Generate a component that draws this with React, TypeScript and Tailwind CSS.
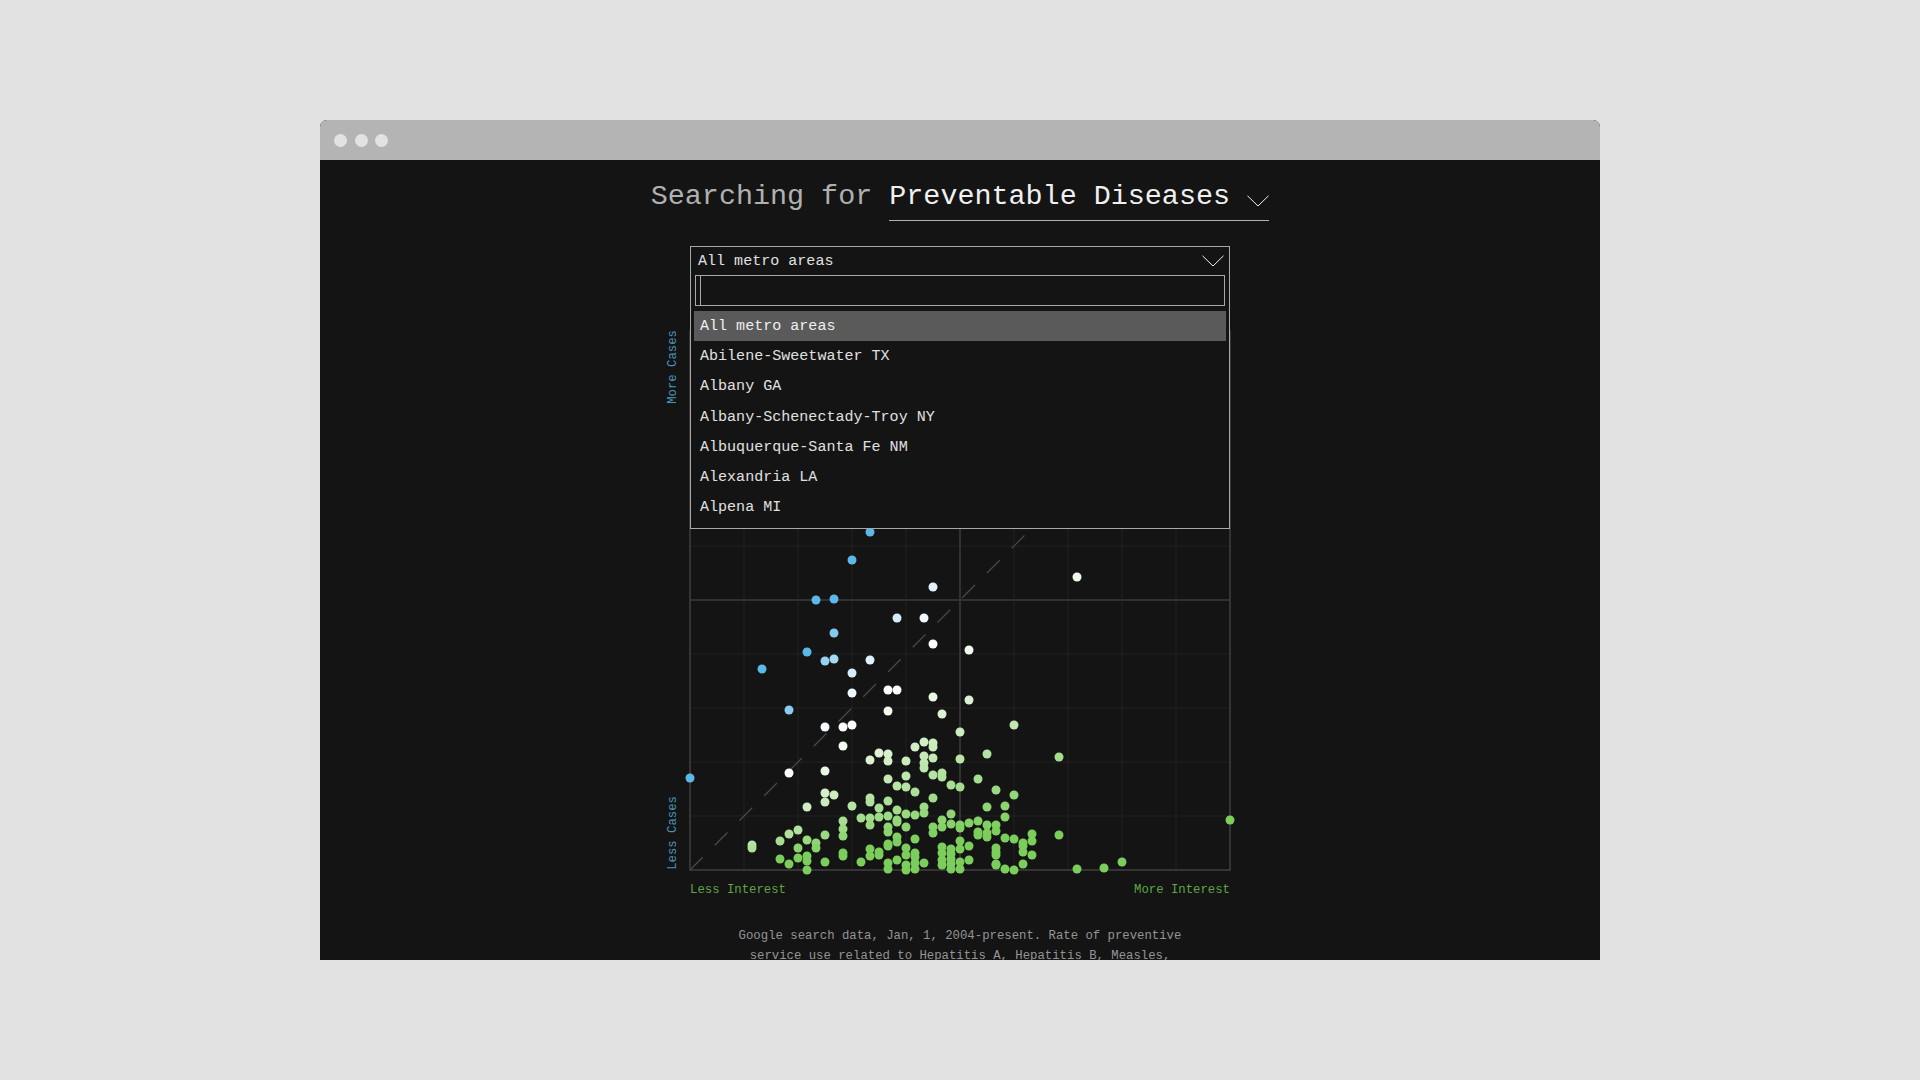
const OPTIONS = [
  "All metro areas",
  "Abilene-Sweetwater TX",
  "Albany GA",
  "Albany-Schenectady-Troy NY",
  "Albuquerque-Santa Fe NM",
  "Alexandria LA",
  "Alpena MI",
];

// page coordinates read off the reference, plot origin is at 690,870
const DOTS: [number, number][] = [
  [870, 532], [852, 560], [933, 587], [816, 600], [834, 599], [897, 618], [924, 618], [834, 633],
  [807, 652], [825, 661], [834, 659], [870, 660], [933, 644], [969, 650], [762, 669], [852, 673],
  [852, 693], [888, 690], [897, 690], [933, 697], [969, 700], [789, 710], [888, 711], [942, 714],
  [825, 727], [843, 727], [852, 725], [960, 732], [1077, 577], [1014, 725],
  [690, 778], [789, 773], [825, 771], [843, 746], [933, 743], [933, 747], [924, 742], [915, 747],
  [879, 753], [888, 754], [888, 761], [870, 760], [906, 761], [924, 756], [924, 763], [924, 768],
  [933, 758], [960, 759], [888, 779], [906, 776], [933, 775], [942, 773], [942, 777], [897, 786],
  [906, 787], [951, 785], [960, 787], [915, 792], [825, 793], [834, 795], [825, 802], [807, 807],
  [852, 806], [870, 798], [870, 802], [888, 801], [933, 798], [879, 808], [897, 810], [924, 807],
  [924, 813], [906, 814], [915, 815], [951, 814], [861, 818], [870, 818], [870, 825], [879, 817],
  [888, 816], [897, 820], [897, 822], [843, 821], [942, 820], [942, 827], [951, 824], [960, 825],
  [960, 828], [969, 823], [906, 827], [933, 827], [933, 833], [888, 827], [888, 832], [843, 829],
  [843, 836], [798, 830], [789, 834], [825, 835], [807, 840], [780, 841], [816, 843], [816, 848],
  [752, 845], [752, 848], [798, 848], [897, 837], [897, 842], [915, 839], [888, 844], [888, 846],
  [960, 841], [960, 849], [969, 846], [870, 849], [870, 856], [879, 852], [879, 855], [906, 848],
  [906, 855], [942, 847], [942, 853], [951, 849], [951, 854], [951, 859], [951, 864], [951, 869],
  [915, 853], [915, 857], [915, 863], [915, 869], [843, 853], [843, 856], [780, 859], [798, 858],
  [807, 856], [807, 861], [789, 864], [825, 862], [807, 870], [861, 862], [888, 863], [888, 869],
  [897, 860], [906, 865], [906, 870], [924, 863], [942, 860], [942, 865], [960, 862], [960, 869],
  [969, 860], [987, 754], [1059, 757], [978, 779], [996, 790], [1014, 795], [987, 807], [1005, 806],
  [1005, 817], [1230, 820], [978, 821], [987, 825], [987, 833], [987, 837], [996, 825], [996, 831],
  [978, 832], [978, 835], [1005, 838], [1014, 839], [1032, 834], [1032, 841], [1059, 835], [1023, 843],
  [1023, 846], [1023, 852], [996, 848], [996, 852], [996, 855], [1032, 855], [996, 864], [996, 865],
  [1023, 864], [1005, 869], [1014, 870], [1077, 869], [1104, 868], [1122, 862],
];

function mix(a: number[], t: number) {
  const k = Math.min(Math.max(t, 0), 1);
  const c = a.map((v) => Math.round(255 + (v - 255) * k));
  return `rgb(${c[0]},${c[1]},${c[2]})`;
}

function dotColor(px: number, py: number) {
  const x = Math.max(px - 690, 1);
  const y = 870 - py;
  const r = y / x;
  if (r >= 1) return mix([92, 184, 230], (r - 1) / 0.85);
  return mix([124, 206, 92], Math.pow(1 - r, 1.6) / 0.8);
}

function Chevron({ className }: { className: string }) {
  return (
    <svg viewBox="0 0 22 12" fill="none" stroke="currentColor" strokeWidth="1" className={className}>
      <path d="M0.5 0.8 L11 11 L21.5 0.8" />
    </svg>
  );
}

function Plot() {
  const ticks = [54, 108, 162, 216, 270, 324, 378, 432, 486];
  return (
    <svg width="540" height="540" viewBox="0 0 540 540" className="block overflow-visible">
      {ticks.map((t) => (
        <g key={t} stroke="#202020" strokeWidth="1">
          <line x1={t} y1="0" x2={t} y2="540" />
          <line x1="0" y1={t} x2="540" y2={t} />
        </g>
      ))}
      <line x1="270" y1="0" x2="270" y2="540" stroke="#3a3a3a" strokeWidth="1.5" />
      <line x1="0" y1="270" x2="540" y2="270" stroke="#3a3a3a" strokeWidth="1.5" />
      <line x1="0" y1="540" x2="540" y2="0" stroke="#4a4a4a" strokeWidth="1.2" strokeDasharray="18 17" />
      <path d="M0 0 V540 H540 V0" fill="none" stroke="#3f3f3f" strokeWidth="1.5" />
      {DOTS.map(([x, y], i) => (
        <circle key={i} cx={x - 690} cy={y - 330} r="4.5" fill={dotColor(x, y)} />
      ))}
    </svg>
  );
}

export default function App() {
  return (
    <div className="h-screen overflow-hidden bg-[#e2e2e2] pt-[120px] font-['Liberation_Mono',monospace]">
      <div className="mx-auto h-[840px] w-[1280px] overflow-hidden rounded-t-[7px] bg-[#141414]">
        <div className="flex h-10 items-center gap-[7.5px] bg-[#b4b4b4] pl-[14px]">
          <span className="h-[13px] w-[13px] rounded-full bg-[#e2e2e2]" />
          <span className="h-[13px] w-[13px] rounded-full bg-[#e2e2e2]" />
          <span className="h-[13px] w-[13px] rounded-full bg-[#e2e2e2]" />
        </div>

        <div className="flex flex-col items-center">
          <div className="mt-[15px] flex h-[46px] items-start text-[28.4px] leading-[43px]">
            <span className="whitespace-pre text-[#b0b0b0]">Searching for </span>
            <span className="flex h-[46px] w-[380px] items-start justify-between border-b border-[#b0b0b0] text-[#f0f0f0]">
              Preventable Diseases
              <Chevron className="mt-[20px] h-[12px] w-[22px]" />
            </span>
          </div>

          <div className="relative mt-[109px] w-[540px]">
            <Plot />

            <div className="absolute -top-[84px] left-0 h-[283px] w-[540px] border border-[#a8a8a8] bg-[#141414] text-[15.05px] text-[#e0e0e0]">
              <div className="flex h-[28px] items-center justify-between pl-[7px] pr-[5px]">
                <span>All metro areas</span>
                <Chevron className="h-[12px] w-[22px] text-[#eeeeee]" />
              </div>
              <div className="mx-1 h-[31px] border border-[#a8a8a8] pl-[4px]">
                <div className="h-full w-px bg-[#a8a8a8]" />
              </div>
              <ul className="mx-[3px] mt-[5px]">
                {OPTIONS.map((name, i) => (
                  <li
                    key={name}
                    className={`flex h-[30.25px] items-center pl-[6px] ${i === 0 ? "bg-[#5a5a5a] text-[#f0f0f0]" : ""}`}
                  >
                    {name}
                  </li>
                ))}
              </ul>
            </div>

            <span className="absolute -left-[25px] top-0 rotate-180 text-[12.3px] leading-4 text-[#4b93ba] [writing-mode:vertical-rl]">
              More Cases
            </span>
            <span className="absolute -left-[25px] bottom-[28px] rotate-180 text-[12.3px] leading-4 text-[#4b93ba] [writing-mode:vertical-rl]">
              Less Cases
            </span>

            <div className="mt-[12px] flex justify-between text-[12.3px] leading-4 text-[#5ea646]">
              <span>Less Interest</span>
              <span>More Interest</span>
            </div>
          </div>

          <p className="mt-[29px] w-[480px] text-center text-[12.3px] leading-[19.5px] text-[#949494]">
            Google search data, Jan, 1, 2004-present. Rate of preventive
            <br />
            service use related to Hepatitis A, Hepatitis B, Measles,
          </p>
        </div>
      </div>
    </div>
  );
}
